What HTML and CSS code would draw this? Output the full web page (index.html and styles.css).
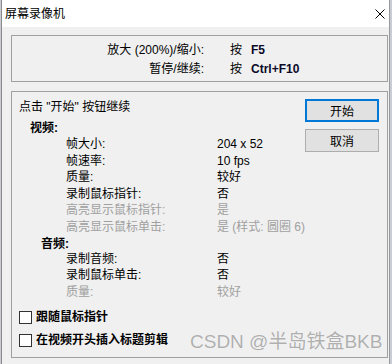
FILE: index.html
```html
<!DOCTYPE html>
<html lang="zh-CN">
<head>
    <meta charset="UTF-8">
    <title>屏幕录像机</title>
    <link rel="stylesheet" href="styles.css">
</head>
<body>
    <div class="window">
        <div class="titlebar">
            <span class="title">屏幕录像机</span>
            <svg class="close" width="10" height="10" viewBox="0 0 10 10">
                <path d="M0.5 0.5 L9.5 9.5 M9.5 0.5 L0.5 9.5" stroke="#000" stroke-width="1" fill="none"/>
            </svg>
        </div>
        <div class="content">
            <div class="group hotkeys">
                <div class="hk-row">
                    <span class="hk-label">放大 (200%)/缩小:</span>
                    <span class="hk-press">按</span>
                    <span class="hk-key">F5</span>
                </div>
                <div class="hk-row">
                    <span class="hk-label">暂停/继续:</span>
                    <span class="hk-press">按</span>
                    <span class="hk-key">Ctrl+F10</span>
                </div>
            </div>

            <div class="group main">
                <div class="main-left">
                    <div class="prompt">点击 "开始" 按钮继续</div>

                    <div class="section-title video">视频:</div>
                    <div class="props">
                        <div class="prop"><span class="prop-name">帧大小:</span><span class="prop-value">204 x 52</span></div>
                        <div class="prop"><span class="prop-name">帧速率:</span><span class="prop-value">10 fps</span></div>
                        <div class="prop"><span class="prop-name">质量:</span><span class="prop-value">较好</span></div>
                        <div class="prop"><span class="prop-name">录制鼠标指针:</span><span class="prop-value">否</span></div>
                        <div class="prop disabled"><span class="prop-name">高亮显示鼠标指针:</span><span class="prop-value">是</span></div>
                        <div class="prop disabled"><span class="prop-name">高亮显示鼠标单击:</span><span class="prop-value">是 (样式: 圆圈 6)</span></div>
                    </div>

                    <div class="section-title audio">音频:</div>
                    <div class="props">
                        <div class="prop"><span class="prop-name">录制音频:</span><span class="prop-value">否</span></div>
                        <div class="prop"><span class="prop-name">录制鼠标单击:</span><span class="prop-value">否</span></div>
                        <div class="prop disabled"><span class="prop-name">质量:</span><span class="prop-value">较好</span></div>
                    </div>

                    <div class="checks">
                        <label class="check"><span class="box"></span>跟随鼠标指针</label>
                        <label class="check"><span class="box"></span>在视频开头插入标题剪辑</label>
                    </div>
                </div>
                <div class="buttons">
                    <button class="btn default">开始</button>
                    <button class="btn">取消</button>
                </div>
                <div class="watermark">CSDN @半岛铁盒BKB</div>
            </div>
        </div>
    </div>
</body>
</html>
```

FILE: styles.css
```css
body {
    margin: 0;
    background: #c9ccd2;
    font-family: "Liberation Sans", "Noto Sans CJK SC", sans-serif;
    font-size: 12px;
    color: #000;
}
.window {
    margin-left: 1px;
    width: 387px;
    height: 364px;
    border-left: 1px solid #8a8a8a;
    border-right: 1px solid #9a9a9a;
    background: #f0f0f0;
    overflow: hidden;
}
.titlebar {
    height: 27px;
    background: #fff;
    display: flex;
    align-items: center;
    justify-content: space-between;
    padding: 0 4px 0 3px;
}
.title {
    font-size: 12px;
    line-height: 16px;
}
.close {
    display: block;
    margin-top: 1px;
}
.content {
    padding: 8px 1px 0 9px;
}
.group {
    border: 1px solid #a0a0a0;
    box-sizing: border-box;
}
.hotkeys {
    height: 47px;
    padding-top: 6px;
    display: flex;
    flex-direction: column;
    gap: 3px;
}
.hk-row {
    display: flex;
    line-height: 16px;
}
.hk-label {
    width: 192px;
    text-align: right;
}
.hk-press {
    margin-left: 26px;
}
.hk-key {
    margin-left: 9px;
    font-weight: bold;
    color: #0a0a28;
}
.main {
    position: relative;
    margin-top: 9px;
    height: 267px;
    padding: 7px 8px 0 7px;
    display: flex;
}
.main-left {
    flex: 1;
}
.prompt {
    line-height: 16px;
}
.section-title {
    font-weight: bold;
}
.section-title.video {
    margin: 5px 0 0 11px;
    line-height: 16px;
}
.section-title.audio {
    margin: 1px 0 0 22px;
    line-height: 14px;
}
.props {
    padding-left: 47px;
}
.prop {
    display: flex;
    height: 16.6px;
    line-height: 16.6px;
}
.prop-name {
    width: 151px;
}
.prop.disabled {
    color: #a0a0a0;
}
.checks {
    margin-top: 9px;
    display: flex;
    flex-direction: column;
    gap: 7px;
}
.check {
    display: flex;
    align-items: center;
    gap: 4px;
    font-weight: bold;
    line-height: 16px;
}
.box {
    width: 11px;
    height: 11px;
    border: 1px solid #333;
    background: #fff;
}
.buttons {
    width: 74px;
    display: flex;
    flex-direction: column;
    gap: 7px;
}
.btn {
    height: 23px;
    background: #e1e1e1;
    border: 1px solid #adadad;
    font-family: inherit;
    font-size: 12px;
    color: #000;
    padding: 0;
}
.btn.default {
    border: 2px solid #0078d7;
}
.watermark {
    position: absolute;
    left: 178px;
    top: 239px;
    font-family: "Liberation Sans", "Noto Sans CJK SC", sans-serif;
    font-size: 19px;
    line-height: 22px;
    color: rgba(150, 150, 150, 0.75);
    text-shadow: 0 0 1px rgba(255, 255, 255, 0.8);
    white-space: nowrap;
}
```
